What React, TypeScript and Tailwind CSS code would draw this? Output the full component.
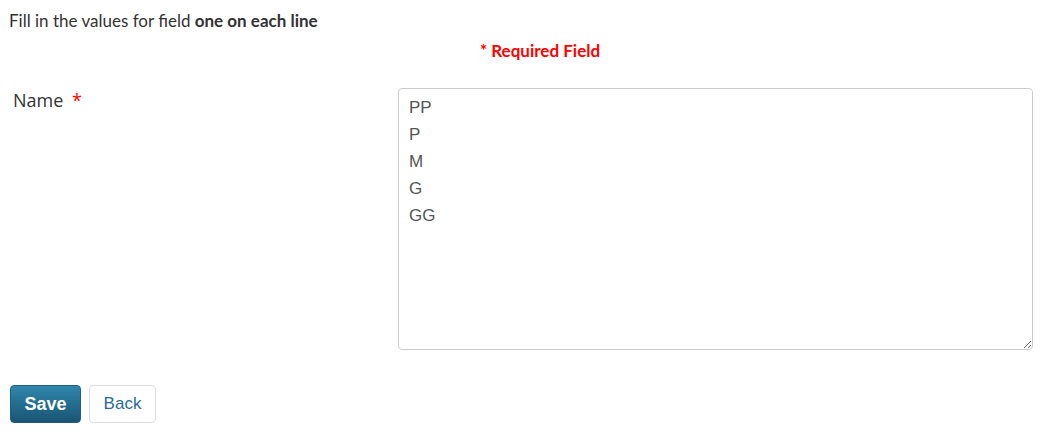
import React from "react";

export default function App() {
  return (
    <div className="w-[1056px] h-[439px] bg-white" style={{ fontFamily: "Lato, 'Open Sans', sans-serif" }}>
      <div className="pt-[11px] pl-[9px] text-[17px] leading-[20px] text-[#333]">
        Fill in the values for field <b className="font-bold">one on each line</b>
      </div>
      <div className="mt-[10px] pl-[24px] text-center text-[17px] leading-[20px] font-bold text-[#ff0000]">
        * Required Field
      </div>
      <div className="mt-[27px] flex">
        <div className="w-[398px] pl-[13px] pt-[2px] text-[18px] leading-[20px] text-[#333]" style={{ fontFamily: "'Open Sans', sans-serif" }}>
          Name <span className="ml-[4px] text-[#ff0000]">*</span>
        </div>
        <textarea
          className="w-[635px] h-[262px] rounded-[4px] border border-[#ccc] px-[10px] py-[5px] text-[17px] leading-[27px] text-[#555] outline-none"
          style={{ fontFamily: "'Liberation Sans', Arial, sans-serif" }}
          defaultValue={"PP\nP\nM\nG\nGG"}
        />
      </div>
      <div className="mt-[35px] pl-[10px] flex gap-[8px]">
        <button
          className="w-[71px] h-[38px] rounded-[4px] border border-[#1d5f80] bg-gradient-to-b from-[#2f88ad] to-[#195473] text-white text-[18px] font-bold"
          style={{ fontFamily: "'Liberation Sans', Arial, sans-serif" }}
        >
          Save
        </button>
        <button
          className="w-[67px] h-[38px] rounded-[4px] border border-[#ddd] bg-white text-[#2a6c96] text-[17px]"
          style={{ fontFamily: "'Liberation Sans', Arial, sans-serif" }}
        >
          Back
        </button>
      </div>
    </div>
  );
}
